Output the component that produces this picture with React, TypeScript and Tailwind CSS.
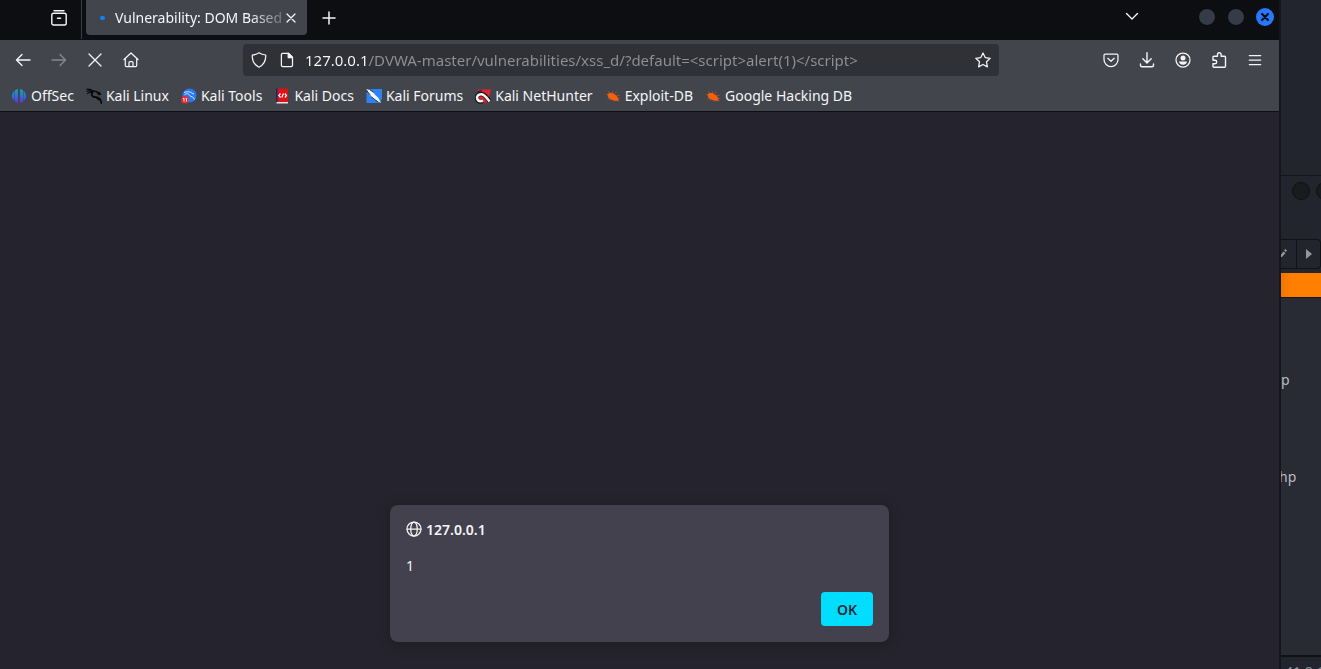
import type { ReactNode } from "react";

const URL_TEXT = "127.0.0.1/DVWA-master/vulnerabilities/xss_d/?default=<script>alert(1)</script>";

function Line({ children, className = "size-4" }: { children: ReactNode; className?: string }) {
  return (
    <svg
      viewBox="0 0 16 16"
      className={`shrink-0 ${className}`}
      fill="none"
      stroke="currentColor"
      strokeWidth="1.25"
      strokeLinecap="round"
      strokeLinejoin="round"
      aria-hidden="true"
    >
      {children}
    </svg>
  );
}

function IconButton({ label, children, className = "" }: { label: string; children: ReactNode; className?: string }) {
  return (
    <button type="button" aria-label={label} className={`flex h-8 w-9 items-center justify-center ${className}`}>
      {children}
    </button>
  );
}

function ExploitIcon() {
  return (
    <svg viewBox="0 0 16 16" className="size-4 shrink-0" aria-hidden="true">
      <path
        d="M3 3.500l2 1.500M1.500 6.500h3M4 10.500l-1.500 1M7 3.500l1 2M10 5l1.500-1.200M12 8l2.500-.8M13 10.300l2 .2M9 12l.5 1.500M13 12.500l1 1.300M6 11l-1 1.500"
        stroke="#b5562a"
        strokeWidth=".8"
      />
      <path d="M2.500 7C3 5 6 4.600 8.500 5.500l3 2 1.500 2.500.5 3-3-.2-3.500-.8-3.500-2z" fill="#f2600f" />
    </svg>
  );
}

const bookmarks = [
  {
    label: "OffSec",
    icon: (
      <svg viewBox="0 0 16 16" className="size-4 shrink-0" aria-hidden="true">
        <defs>
          <linearGradient id="offsec" x1="0" y1="0" x2="0" y2="1">
            <stop offset="0" stopColor="#12a5a8" />
            <stop offset=".5" stopColor="#2b74d8" />
            <stop offset="1" stopColor="#6a2bd9" />
          </linearGradient>
        </defs>
        <path
          d="M3.500 2.700v10.600A7 7 0 0 1 .8 8a7 7 0 0 1 2.700-5.300zM4 2.300A7 7 0 0 1 7 1v14a7 7 0 0 1-3-1.300zM9 1a7 7 0 0 1 3 1.300v11.400A7 7 0 0 1 9 15zM12.500 2.700A7 7 0 0 1 15.200 8a7 7 0 0 1-2.700 5.300z"
          fill="url(#offsec)"
        />
      </svg>
    ),
  },
  {
    label: "Kali Linux",
    icon: (
      <svg viewBox="0 0 16 16" className="size-4 shrink-0" fill="none" stroke="#08090b" strokeLinecap="round" aria-hidden="true">
        <path d="M.8 1.200C3 1 5.500 1.600 7 3M.8 3.200C3 2.500 5 3 6.500 4M1.500 5.500c1.500-1.200 3.500-1.200 5-.5" strokeWidth="1.100" />
        <path d="M6 3.500c2.500-.5 4.500-.2 5.800.9l1.700.6 1 1.200M11.500 5l1.500 1.500" strokeWidth="1.500" />
        <path d="M6.500 4.500C5 6.500 6 8.600 8.200 9c2.300.4 4.300 0 5.600 2 .8 1.200 1.300 2.300 1.500 4" strokeWidth="1.800" />
        <path d="M10.500 9.500l2 2.300" strokeWidth="1.200" />
      </svg>
    ),
  },
  {
    label: "Kali Tools",
    icon: (
      <svg viewBox="0 0 16 16" className="size-4 shrink-0" aria-hidden="true">
        <circle cx="8.500" cy="7.500" r="7" fill="#2877f5" />
        <path d="M3 4.500c3-1.200 6-1 8 .6l2 1M3.500 6.800C6 5 8 5.500 8.500 7.500c1.500 1.500 4 .8 5 4" fill="none" stroke="#dce9fb" strokeWidth="1" />
        <circle cx="4" cy="11.800" r="3.800" fill="#ee2c37" />
        <path d="M2 10.500h1v3M4.500 10.500h1v3" fill="none" stroke="#fff" strokeWidth=".9" />
      </svg>
    ),
  },
  {
    label: "Kali Docs",
    icon: (
      <svg viewBox="0 0 16 16" className="size-4 shrink-0" aria-hidden="true">
        <path d="M2 .5h2v14.500H2z" fill="#102a6b" />
        <path d="M3.500.5H14V14H3.500z" fill="#dd1219" />
        <path d="M2.500 14H14v1.500H2.500z" fill="#e2e4e8" />
        <path d="M6.500 5.500L4.800 7.500l1.700 2M10.800 5.500l1.700 2-1.700 2M9.500 5.500l-1.700 4" fill="none" stroke="#fff" strokeWidth="1.200" />
      </svg>
    ),
  },
  {
    label: "Kali Forums",
    icon: (
      <svg viewBox="0 0 16 16" className="size-4 shrink-0" aria-hidden="true">
        <path d="M3 1h13v10l-3 4H.5V5z" fill="#2b83f6" />
        <path d="M0 1l6 1.800 3.500 4.500 2.500 2.200 3.300 5.500-5.800-3L4 7.800z" fill="#f4f6f8" />
        <path d="M0 1.500l4.500 6M4 1.800l3.500 2.500" stroke="#15202c" strokeWidth=".9" fill="none" />
        <path d="M5 8.500l7 5.500" stroke="#15202c" strokeWidth=".8" />
      </svg>
    ),
  },
  {
    label: "Kali NetHunter",
    icon: (
      <svg viewBox="0 0 16 16" className="size-4 shrink-0" aria-hidden="true">
        <path d="M3 1.500h13L12.500 14.500H4z" fill="#e5222f" />
        <path
          d="M14.500 13.500C12.500 10 10 6.500 6.500 6 3 5.500 1 8.500 2 11c.8 2 3 3 6 2"
          fill="none"
          stroke="#17181b"
          strokeWidth="4.400"
        />
        <path
          d="M14.500 13.500C12 10 9.800 6.500 6.500 6.200 3.200 6 1.300 8.500 2.300 11c.7 1.800 2.700 2.600 5.700 1.700"
          fill="none"
          stroke="#f7f7f8"
          strokeWidth="2.500"
        />
        <path d="M3 3.500l4-.8" stroke="#17181b" strokeWidth="1" />
      </svg>
    ),
  },
  { label: "Exploit-DB", icon: <ExploitIcon /> },
  { label: "Google Hacking DB", icon: <ExploitIcon /> },
];

function TabBar() {
  return (
    <header className="flex h-10 items-start bg-[#0d0e12]">
      <div className="flex h-[39px] w-[82px] shrink-0 items-start justify-end border-r border-[#3c3d44] pr-1">
        <IconButton label="View recent browsing" className="mt-[2px]">
          <Line>
            <path d="M3 .8h10" strokeWidth="1.400" />
            <rect x=".8" y="3.300" width="14.400" height="11.700" rx="1.800" strokeWidth="1.400" />
            <path d="M6.500 8.300h3" strokeWidth="1.500" />
          </Line>
        </IconButton>
      </div>
      <div className="ml-1 flex h-[35px] w-[221px] items-center rounded-b bg-[#42454c] pl-[14px] pr-2">
        <span className="h-1 w-[5px] shrink-0 rounded-full bg-[#0a84ff]" />
        <button
          type="button"
          className="ml-[10px] w-[168px] shrink-0 overflow-hidden whitespace-nowrap text-left mask-[linear-gradient(90deg,black_80%,transparent_106%)]"
        >
          Vulnerability: DOM Based
        </button>
        <button type="button" aria-label="Close tab">
          <Line>
            <path d="M4 4l8 8M12 4l-8 8" />
          </Line>
        </button>
      </div>
      <IconButton label="New tab" className="ml-1 mt-[2px]">
        <Line>
          <path d="M8 2v12M2 8h12" strokeWidth="1.500" />
        </Line>
      </IconButton>
      <IconButton label="List all tabs" className="ml-auto">
        <Line>
          <path d="M2.500 5.500L8 11l5.500-5.500" strokeWidth="1.400" />
        </Line>
      </IconButton>
      <div className="ml-12 mr-[5px] flex h-[34px] items-center gap-[11px]">
        <button type="button" aria-label="Minimize" className="size-[18px] rounded-full border border-[#0a0a0d] bg-[#363b48]" />
        <button type="button" aria-label="Maximize" className="size-[18px] rounded-full border border-[#0a0a0d] bg-[#363b48]" />
        <button
          type="button"
          aria-label="Close window"
          className="flex size-[18px] items-center justify-center rounded-full bg-[#2777ff] text-[#0d0e12]"
        >
          <Line>
            <path d="M5 5l6 6M11 5l-6 6" strokeWidth="2.200" />
          </Line>
        </button>
      </div>
    </header>
  );
}

function Toolbar() {
  return (
    <nav className="flex h-10 items-center bg-[#42454c] pl-[5px] pr-[6px]">
      <IconButton label="Back">
        <Line>
          <path d="M15 8H1.500M7 2.500L1.500 8 7 13.500" strokeWidth="1.400" />
        </Line>
      </IconButton>
      <IconButton label="Forward" className="text-[#85878c]">
        <Line>
          <path d="M1 8h13.500M9 2.500L14.500 8 9 13.500" strokeWidth="1.400" />
        </Line>
      </IconButton>
      <IconButton label="Stop">
        <Line>
          <path d="M2 2l12 12M14 2L2 14" />
        </Line>
      </IconButton>
      <IconButton label="Home">
        <Line>
          <path d="M1 7.500L8 1l7 6.500M2.300 6.500v7q0 1.200 1.200 1.200h9q1.200 0 1.200-1.200v-7M6 14.500v-4q0-1 1-1h2q1 0 1 1v4" />
        </Line>
      </IconButton>
      <div className="mx-[94px] flex h-8 flex-1 items-center rounded bg-[#303136] px-2">
        <Line>
          <path d="M8 .8c2 1.400 4.200 2 6.700 2.200.3 5.500-1.400 9.700-6.700 12.200C2.700 12.700 1 8.500 1.300 3 3.800 2.800 6 2.200 8 .8z" />
        </Line>
        <Line className="ml-3 size-4">
          <path d="M3.500 1.300h6l4 4v8q0 1.300-1.300 1.300H3.700q-1.300 0-1.300-1.300V2.500q0-1.200 1.100-1.200z" />
          <path d="M9.200 1.300v4.300h4.300z" fill="currentColor" />
        </Line>
        <input
          aria-label="Address"
          defaultValue={URL_TEXT}
          spellCheck={false}
          className="ml-[10px] min-w-0 flex-1 bg-[linear-gradient(90deg,#fbfbfe_64px,#8f9094_64px)] bg-clip-text text-[15px] text-transparent outline-none"
        />
        <button type="button" aria-label="Bookmark this page">
          <Line>
            <path d="M8 1l2.200 4.600 5 .7-3.700 3.500.9 5.100L8 12.500l-4.400 2.400.9-5.100L.8 6.300l5-.7z" />
          </Line>
        </button>
      </div>
      <IconButton label="Pocket">
        <Line>
          <path d="M2.300 2h11.400q1.300 0 1.300 1.300V7.500a7 7 0 0 1-14 0V3.300Q1 2 2.300 2zM4.800 6.300L8 9.300l3.200-3" />
        </Line>
      </IconButton>
      <IconButton label="Downloads">
        <Line>
          <path d="M8 .8v10M3.800 6.800L8 11l4.200-4.200M1.500 12v1.200q0 1.500 1.500 1.500h10q1.500 0 1.500-1.500V12" strokeWidth="1.400" />
        </Line>
      </IconButton>
      <IconButton label="Account">
        <Line>
          <circle cx="8" cy="8" r="7" />
          <circle cx="8" cy="6" r="2.500" fill="currentColor" stroke="none" />
          <path d="M4 9.600h8c0 2-1.700 3.200-4 3.200s-4-1.200-4-3.200z" fill="currentColor" stroke="none" />
        </Line>
      </IconButton>
      <IconButton label="Extensions">
        <Line>
          <path
            d="M2 6.800V5.300q0-1 1-1h3.500V2.600a1.800 1.800 0 0 1 3.600 0v1.700h3.400q1 0 1 1v9q0 1-1 1H3q-1 0-1-1v-2.600h2a1.700 1.700 0 0 0 0-3.400H2z"
            strokeWidth="1.400"
          />
        </Line>
      </IconButton>
      <IconButton label="Menu">
        <Line>
          <path d="M2.300 3.500h11.400M2.300 8h11.400M2.300 12.500h11.400" />
        </Line>
      </IconButton>
    </nav>
  );
}

function AlertDialog() {
  return (
    <section
      role="alertdialog"
      aria-labelledby="alert-origin"
      aria-describedby="alert-text"
      className="flex w-[499px] max-w-full flex-col rounded-lg bg-[#42414d] px-4 pt-[15px] pb-4 shadow-[0_2px_14px_rgba(0,0,0,0.25)]"
    >
      <h1 id="alert-origin" className="flex h-[18px] items-center gap-1 font-semibold">
        <Line>
          <circle cx="8" cy="8" r="7" />
          <ellipse cx="8" cy="8" rx="3.300" ry="7" />
          <path d="M1 8h14" />
        </Line>
        127.0.0.1
      </h1>
      <p id="alert-text" className="mt-[18px] h-5 leading-5">
        1
      </p>
      <button
        type="button"
        className="mt-4 h-[34px] w-[52px] self-end rounded bg-[#00ddff] font-semibold text-[#2b2a33]"
      >
        OK
      </button>
    </section>
  );
}

// Slice of the desktop windows that sit behind the browser.
function BackgroundWindows() {
  return (
    <aside className="flex w-[42px] shrink-0 flex-col overflow-hidden border-l-2 border-[#15161b] bg-[#282a34] text-[#b9bcc2]">
      <div className="h-[176px] shrink-0 border-b border-[#15161a] bg-[#22252d]" />
      <div className="flex h-[63px] shrink-0 gap-[6px] bg-[#22252d] pl-[11px] pt-[6px]">
        <span className="size-[18px] shrink-0 rounded-full border border-[#101114] bg-[#1a1b1f]" />
        <span className="size-[18px] shrink-0 rounded-full border border-[#101114] bg-[#1a1b1f]" />
      </div>
      <div className="h-[34px] shrink-0 bg-[#22252d]">
        <div className="flex h-[30px] rounded-r border border-l-0 border-[#101216] text-[#95979b]">
          <button type="button" aria-label="Edit path" className="flex w-4 items-center border-r border-[#101216]">
            <svg viewBox="0 0 6 12" className="h-3 w-[6px]" aria-hidden="true">
              <path d="M0 6.500L2.500 3.500 4.500 5 1 9H0zM3 2.500L4.300 1 6 2.500 5 4z" fill="currentColor" />
            </svg>
          </button>
          <button type="button" aria-label="Forward" className="flex flex-1 items-center justify-center">
            <svg viewBox="0 0 6 10" className="h-[10px] w-[6px]" aria-hidden="true">
              <path d="M0 0l6 5-6 5z" fill="currentColor" />
            </svg>
          </button>
        </div>
      </div>
      <div className="h-6 shrink-0 bg-linear-to-r from-[#ee7600] to-[#ff7f00] to-25%" />
      <div className="flex flex-1 flex-col border-t border-[#15161a] pt-[72px]">
        <span className="leading-5">p</span>
        <span className="-ml-[2px] mt-[77px] leading-5">hp</span>
      </div>
      <div className="h-[14px] shrink-0 overflow-hidden border-t-2 border-[#101114] bg-[#22252d] pl-1 pt-[5px] leading-5 whitespace-nowrap text-[#8b8e94]">
        41.8 G
      </div>
    </aside>
  );
}

export default function App() {
  return (
    <div className="flex h-screen overflow-hidden bg-[#25232d] font-['Noto_Sans',sans-serif] text-[14px] text-[#f5f5f7]">
      <div className="flex min-w-0 flex-1 flex-col">
        <TabBar />
        <Toolbar />
        <ul className="flex h-8 items-center gap-3 border-b border-[#0d0e12] bg-[#42454c] pl-[11px]">
          {bookmarks.map((b) => (
            <li key={b.label}>
              <a href="#" className="flex items-center gap-1 whitespace-nowrap">
                {b.icon}
                {b.label}
              </a>
            </li>
          ))}
        </ul>
        <main className="flex flex-1 items-end justify-center pb-[27px]">
          <AlertDialog />
        </main>
      </div>
      <BackgroundWindows />
    </div>
  );
}
